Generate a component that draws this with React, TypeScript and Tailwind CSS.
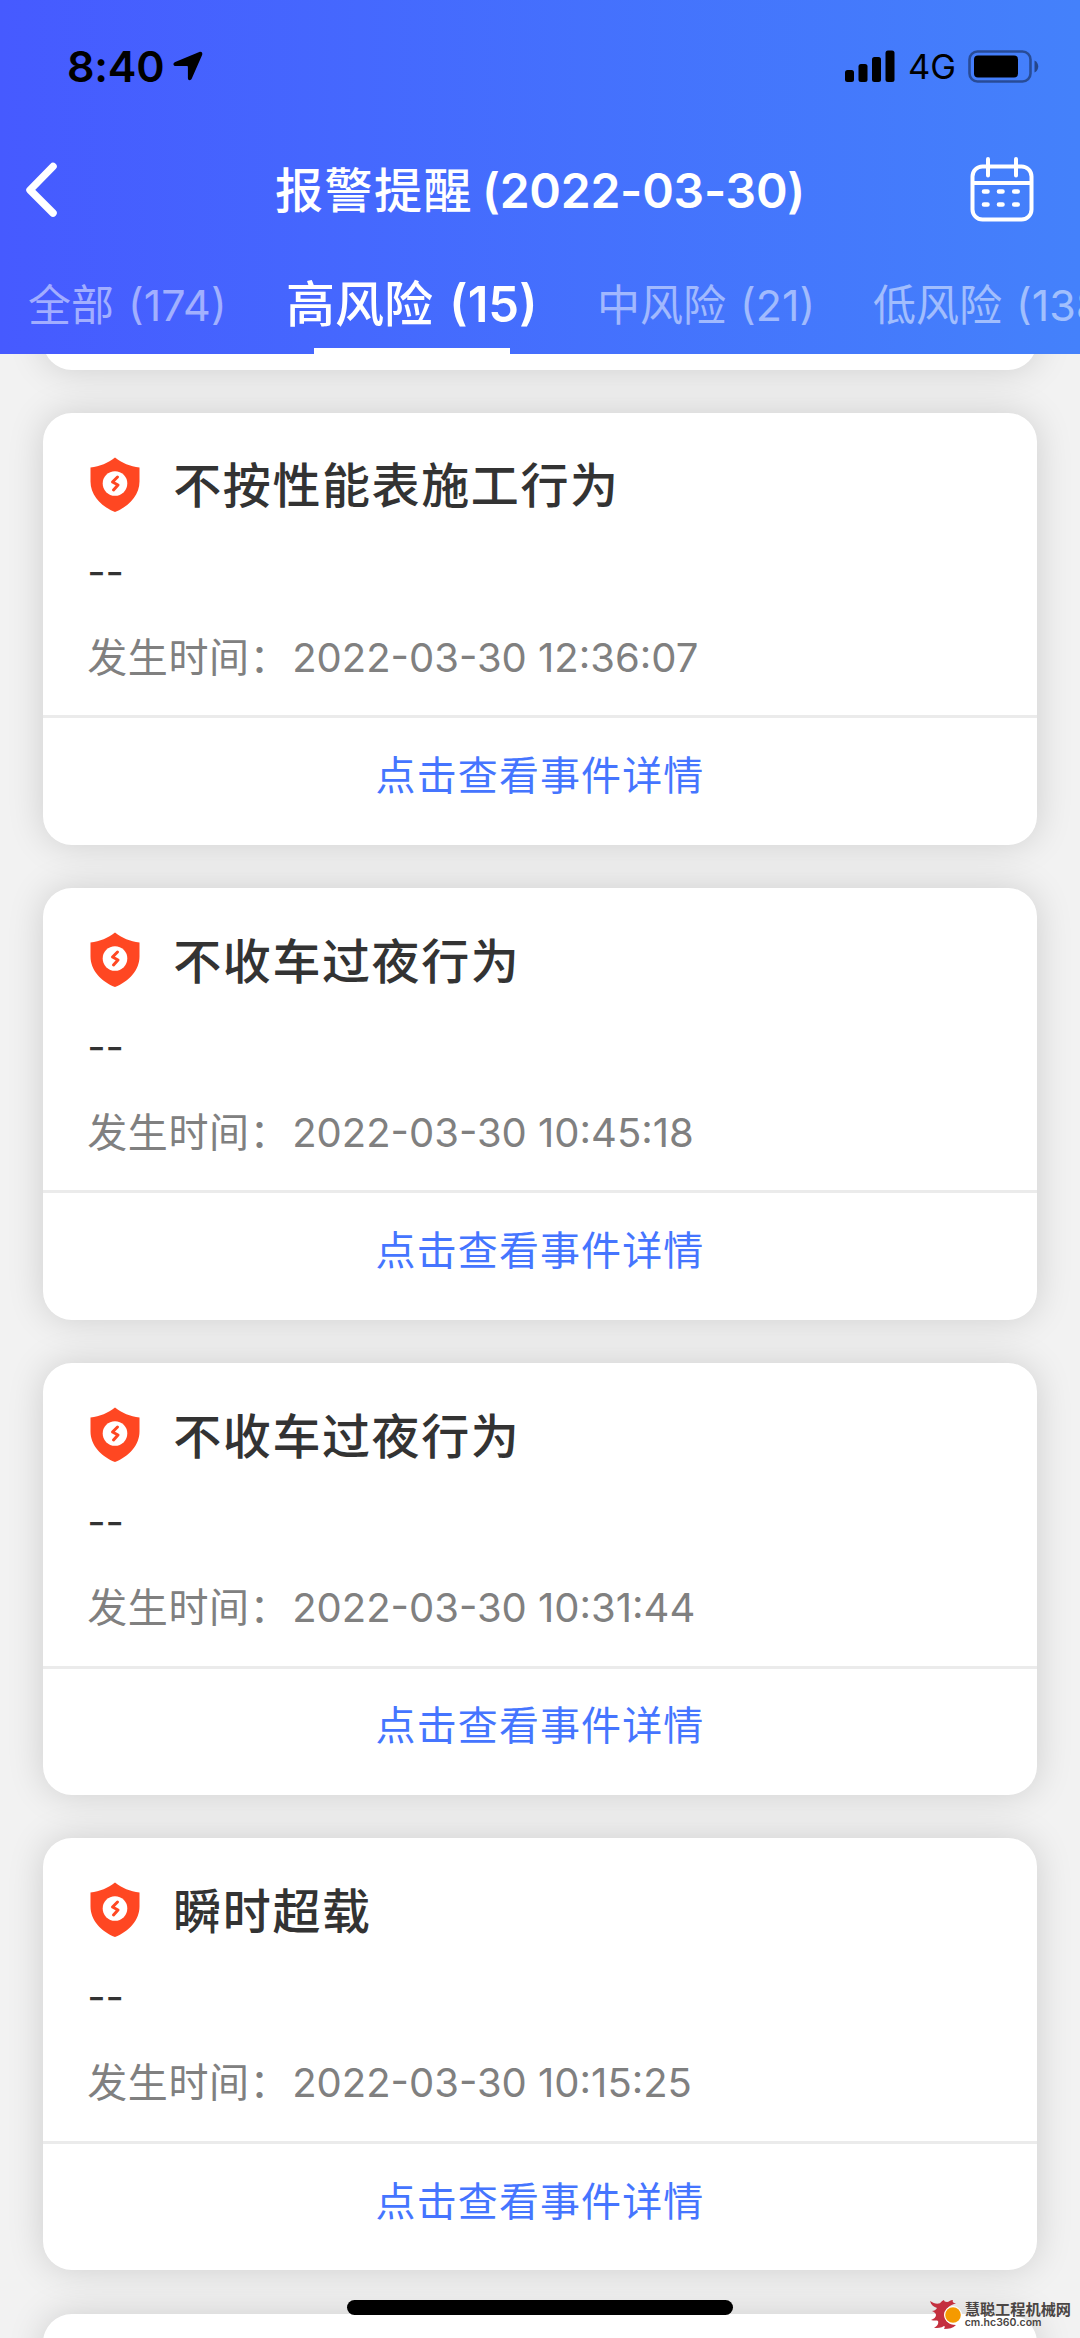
interface Alarm {
  title: string;
  time: string;
}

const alarms: Alarm[] = [
  { title: '不按性能表施工行为', time: '2022-03-30 12:36:07' },
  { title: '不收车过夜行为', time: '2022-03-30 10:45:18' },
  { title: '不收车过夜行为', time: '2022-03-30 10:31:44' },
  { title: '瞬时超载', time: '2022-03-30 10:15:25' },
];

function StatusBar() {
  return (
    <div className="flex h-[132px] items-center justify-between pl-[67px] pr-[41px] text-black">
      <div className="flex items-center gap-[9px]">
        <span className="text-[43px] font-semibold leading-none tracking-[-0.200px]">8:40</span>
        <svg width="30" height="30" viewBox="0 0 30 30" fill="currentColor">
          <path d="M26.300.9 2.200 11c-2.600 1.100-2.200 4.100.6 4.100h11.300c.5 0 .8.300.8.800v11c0 2.700 2.800 3 3.900.6L29 4.200C30 1.900 28.600 0 26.300.9Z" />
        </svg>
      </div>
      <div className="flex items-center">
        <svg width="51" height="32" viewBox="0 0 51 32" fill="currentColor">
          <rect x="0" y="20" width="9" height="12" rx="2.500" />
          <rect x="13.500" y="14" width="9" height="18" rx="2.500" />
          <rect x="27" y="7" width="9" height="25" rx="2.500" />
          <rect x="40.500" y="0.500" width="9" height="31.500" rx="2.500" />
        </svg>
        <span className="ml-3 mt-[3px] w-[60px] text-[34.500px] leading-none">4G</span>
        <svg width="71" height="33" viewBox="0 0 71 33">
          <rect x="1.500" y="1.500" width="61" height="30" rx="8" fill="none" stroke="#000" strokeOpacity="0.4" strokeWidth="2.600" />
          <rect x="6" y="5.500" width="44" height="22" rx="4" fill="#000" />
          <path d="M66.500 10.500c5 2 5 10 0 12Z" fill="#000" fillOpacity="0.45" />
        </svg>
      </div>
    </div>
  );
}

function NavBar() {
  return (
    <div className="flex h-[116px] items-center justify-between">
      <div className="w-[110px] pl-[24px]">
        <svg width="34" height="56" viewBox="0 0 34 56" fill="none" stroke="#fff" strokeWidth="7.500" strokeLinecap="round" strokeLinejoin="round">
          <path d="M29 4.500 6 28 29 51" />
        </svg>
      </div>
      <h1 className="whitespace-nowrap pt-[2px] text-[48px] font-semibold leading-none">
        <span className="font-medium tracking-[1.500px]">报警提醒</span>
        <span className="ml-[9px] tracking-[-0.250px]">(2022-03-30)</span>
      </h1>
      <div className="w-[110px]">
        <svg width="64" height="66" viewBox="0 0 64 66" fill="none" stroke="#fff" strokeWidth="4">
          <rect x="2.500" y="9.500" width="59" height="53" rx="10" />
          <path d="M2.500 26h59" />
          <path d="M18 2v16.500M46 2v16.500" strokeLinecap="round" />
          <path d="M14 34.500h3.500M29 34.500h3.500M44.200 34.500h3.500M14 47.500h3.500M29 47.500h3.500M44.200 47.500h3.500" strokeWidth="4.600" strokeLinecap="round" />
        </svg>
      </div>
    </div>
  );
}

function Tabs() {
  return (
    <div className="flex h-[106px] items-center overflow-hidden whitespace-nowrap pl-[28px] text-[43px] text-white/50 [word-spacing:2px]">
      <div className="w-[258px] shrink-0 pt-[8px]">全部 (174)</div>
      <div className="relative flex h-full w-[311px] shrink-0 items-center pt-[8px] text-[49px] font-semibold text-white">
        <span className="whitespace-pre [word-spacing:4px]"><span className="font-medium">高风险</span> (15)</span>
        <span className="absolute bottom-0 left-[28px] h-[6px] w-[196px] bg-white" />
      </div>
      <div className="w-[276px] shrink-0 pt-[8px]">中风险 (21)</div>
      <div className="shrink-0 pt-[8px]">低风险 (138)</div>
    </div>
  );
}

function ShieldIcon() {
  return (
    <svg width="50" height="56" viewBox="0 0 50 56" className="shrink-0">
      <path d="M25 .5c7 5.500 15 9 24.500 10v14C49.500 38 39 49.500 25 55 11 49.500 .5 38 .5 24.500v-14C10 9.500 18 6 25 .5Z" fill="#ff4722" />
      <circle cx="25" cy="26.500" r="12.300" fill="#fff" />
      <path d="m27.500 20-5 5 5.500 3-4.500 5" fill="none" stroke="#ff4722" strokeWidth="3" strokeLinecap="round" strokeLinejoin="round" />
    </svg>
  );
}

function AlarmCard({ alarm }: { alarm: Alarm }) {
  return (
    <div className="h-[432px] shrink-0 rounded-[28.800px] bg-white shadow-[0_0_36px_rgba(0,0,0,0.15)]">
      <div className="h-[302.400px] px-[44px] pt-[44px]">
        <div className="flex h-[56px] items-center gap-[33px] pl-[3px]">
          <ShieldIcon />
          <h2 className="pt-[3px] text-[48px] font-medium leading-none tracking-[1.600px] text-[#333]">{alarm.title}</h2>
        </div>
        <div className="mt-[31px] h-[56px] text-[40px] leading-[56px] text-[#333]">--</div>
        <div className="mt-[30px] flex h-[56px] items-center text-[40px] leading-none text-[#808080]">
          <span className="w-[205px] shrink-0 tracking-[0.600px]">发生时间：</span>
          <span className="whitespace-nowrap">{alarm.time}</span>
        </div>
      </div>
      <div className="flex h-[129.600px] items-center justify-center border-t-[3px] border-[#ebebeb] pb-[11px] text-[40px] tracking-[1.100px] text-[#4575ff]">
        点击查看事件详情
      </div>
    </div>
  );
}

function Watermark() {
  return (
    <div className="absolute bottom-[9px] right-[9px] flex items-center gap-[2px] text-[#4a4543]">
      <svg width="33" height="29" viewBox="0 0 33 29">
        <path d="M26 3.500C23 3 22 1.500 23 0c-3 0-4 2-6 2-2 0-3-1-3-2-3 1-3 3-5 3.500C6 4 3 3 0 1c1 4 4 6 7 7-1 2-3 3-5 3 2 1 4 2 4 4 0 2-2 4-5 5 3 1 6 0 7 1 1 3-1 5-4 7 4 0 7 0 10-2 1 0 1 1 0 3 5 0 9-1 12-4C11 25 11 6 26 3.500Z" fill="#c4303f" />
        <circle cx="23" cy="15" r="9" fill="#fff" />
        <circle cx="23" cy="15" r="7.800" fill="#f59a00" />
      </svg>
      <div className="flex flex-col">
        <span className="text-[15.200px] font-bold leading-[17px]">慧聪工程机械网</span>
        <span className="text-[10.500px] font-semibold leading-[10px]">cm.hc360.com</span>
      </div>
    </div>
  );
}

export default function App() {
  return (
    <div className="relative flex h-[2338px] w-[1080px] flex-col overflow-hidden bg-[#f2f2f2] font-[Inter,'Noto_Sans_CJK_SC',sans-serif]">
      <header className="h-[354px] shrink-0 bg-linear-to-r from-[#465aff] to-[#4481fb] text-white">
        <StatusBar />
        <NavBar />
        <Tabs />
      </header>
      <main className="flex min-h-0 flex-1 flex-col gap-[43.200px] overflow-hidden px-[43.200px]">
        {/* card scrolled up under the header */}
        <div className="-mt-[416.300px] h-[432px] shrink-0 rounded-[28.800px] bg-white shadow-[0_0_36px_rgba(0,0,0,0.15)]" />
        {alarms.map((alarm) => (
          <AlarmCard key={alarm.time} alarm={alarm} />
        ))}
        <div className="h-[432px] shrink-0 rounded-[28.800px] bg-white shadow-[0_0_36px_rgba(0,0,0,0.15)]" />
      </main>
      <div className="absolute left-[347px] top-[2300px] h-[15px] w-[386px] rounded-full bg-black" />
      <Watermark />
    </div>
  );
}
